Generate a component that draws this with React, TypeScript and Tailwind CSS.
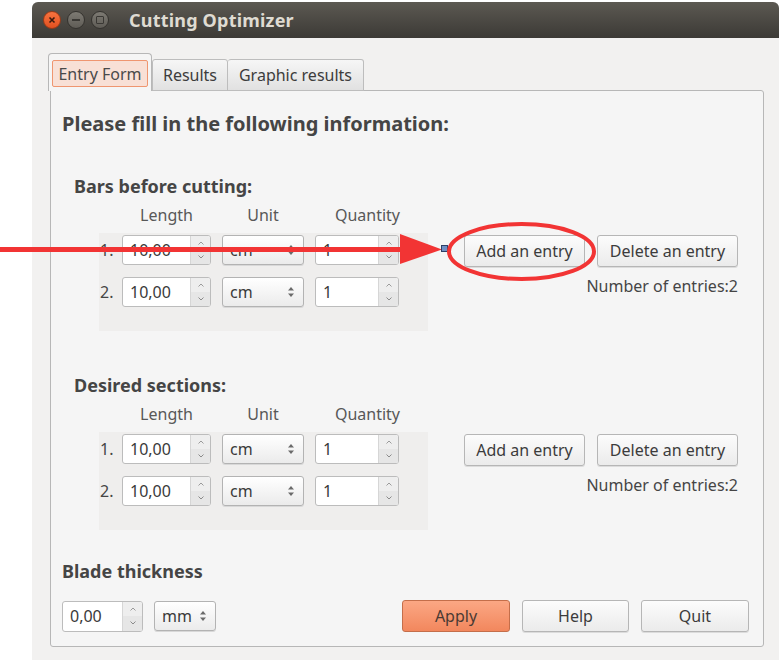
import React from "react";

const font = { fontFamily: '"Noto Sans", "Open Sans", sans-serif' };

function SpinArrows() {
  return (
    <div className="w-[20px] h-full flex flex-col border-l border-[#d6d6d6] bg-[#eeeeee]">
      <div className="flex-1 flex items-center justify-center">
        <svg width="6" height="4" viewBox="0 0 6 4">
          <path d="M0.5 3.5 L3 1 L5.5 3.5" fill="none" stroke="#9a9a9a" strokeWidth="1" />
        </svg>
      </div>
      <div className="flex-1 flex items-center justify-center bg-[#e6e6e6]">
        <svg width="6" height="4" viewBox="0 0 6 4">
          <path d="M0.5 0.5 L3 3 L5.5 0.5" fill="none" stroke="#8a8a8a" strokeWidth="1" />
        </svg>
      </div>
    </div>
  );
}

function Spin({ value, className }: { value: string; className: string }) {
  return (
    <div className={`flex h-[30px] border border-[#bcbcbc] rounded-[3px] overflow-hidden bg-white ${className}`}>
      <div className="flex-1 flex items-center pl-[7px] text-[16px] text-[#3a3a3a]">{value}</div>
      <SpinArrows />
    </div>
  );
}

function Combo({ value, className }: { value: string; className: string }) {
  return (
    <div
      className={`flex items-center justify-between h-[30px] pl-[7px] pr-[8px] border border-[#b3b3b3] rounded-[3px] bg-gradient-to-b from-[#ffffff] to-[#ebebeb] shadow-[0_1px_0_#d8d8d8] text-[16px] text-[#3a3a3a] ${className}`}
    >
      <span>{value}</span>
      <svg width="8" height="12" viewBox="0 0 8 12">
        <path d="M4 1 L7 4.5 L1 4.5 Z" fill="#6a6a6a" />
        <path d="M4 11 L7 7.5 L1 7.5 Z" fill="#6a6a6a" />
      </svg>
    </div>
  );
}

function Btn({ label, className }: { label: string; className: string }) {
  return (
    <div
      className={`flex items-center justify-center h-[32px] border border-[#b6b6b6] rounded-[3px] bg-gradient-to-b from-[#fcfcfc] to-[#ebebeb] shadow-[0_1px_0_#dcdcdc] text-[16px] text-[#3c3c3c] ${className}`}
    >
      {label}
    </div>
  );
}

function EntrySection({ title }: { title: string }) {
  return (
    <div className="pl-[12px]">
      <div className="text-[18px] leading-[20px] font-bold text-[#454545]">{title}</div>
      <div className="mt-[9px] h-[20px] flex pl-[48px] text-[16px] leading-[20px] text-[#585858]">
        <div className="w-[89px] text-center">Length</div>
        <div className="w-[82px] ml-[11px] text-center">Unit</div>
        <div className="w-[85px] ml-[11px] text-right">Quantity</div>
      </div>
      <div className="mt-[8px] flex pl-[25px]">
        <div className="w-[329px] bg-[#efeeed] pt-[2px] pb-[24px] flex flex-col gap-[12px]">
          {["1.", "2."].map((n) => (
            <div key={n} className="flex items-center h-[30px]">
              <div className="w-[23px] pl-[1px] text-[16px] text-[#454545]">{n}</div>
              <Spin value="10,00" className="w-[89px]" />
              <Combo value="cm" className="w-[82px] ml-[11px]" />
              <Spin value="1" className="w-[84px] ml-[11px]" />
            </div>
          ))}
        </div>
        <div className="ml-[36px] mt-[2px] flex flex-col">
          <div className="flex gap-[12px]">
            <Btn label="Add an entry" className="w-[121px]" />
            <Btn label="Delete an entry" className="w-[141px]" />
          </div>
          <div className="mt-[9px] text-right text-[16px] leading-[20px] text-[#454545]">Number of entries:2</div>
        </div>
      </div>
    </div>
  );
}

export default function App() {
  return (
    <div className="relative w-[779px] h-[660px] bg-white overflow-hidden" style={font}>
      <div className="ml-[32px] mt-[2px] w-[747px] h-[658px] bg-[#f2f1f0] rounded-tl-[6px] rounded-tr-[6px] overflow-hidden">
        {/* Title bar */}
        <div className="h-[36px] bg-gradient-to-b from-[#5c5952] to-[#3c3a36] flex items-center pl-[11px]">
          <div className="w-[18px] h-[18px] rounded-full bg-gradient-to-b from-[#f7733f] to-[#e2501f] border border-[#9b3a17] flex items-center justify-center">
            <svg width="8" height="8" viewBox="0 0 8 8">
              <path d="M1.5 1.5 L6.5 6.5 M6.5 1.5 L1.5 6.5" stroke="#3a1a0e" strokeWidth="1.6" />
            </svg>
          </div>
          <div className="ml-[6px] w-[18px] h-[18px] rounded-full bg-gradient-to-b from-[#7d7a73] to-[#5f5c56] border border-[#34322e] flex items-center justify-center">
            <div className="w-[8px] h-[2px] bg-[#3a3834]" />
          </div>
          <div className="ml-[6px] w-[18px] h-[18px] rounded-full bg-gradient-to-b from-[#7d7a73] to-[#5f5c56] border border-[#34322e] flex items-center justify-center">
            <div className="w-[8px] h-[8px] border-[1.5px] border-[#3a3834] rounded-[1px]" />
          </div>
          <div className="ml-[20px] text-[18px] font-bold text-[#dfdbd2] tracking-[0.2px]">Cutting Optimizer</div>
        </div>

        <div className="px-[18px] pt-[15px]">
          {/* Tabs */}
          <div className="flex items-end -ml-[2px] relative z-10 -mb-px">
            <div className="w-[104px] h-[38px] border border-b-0 border-[#b7b7b7] rounded-t-[4px] bg-[#f5f5f5] px-[3px] pt-[6px]">
              <div className="h-[27px] flex items-center justify-center border border-[#ef9670] bg-[#f8e0d6] rounded-[2px] text-[16px] text-[#4a4a4a]">
                Entry Form
              </div>
            </div>
            <div className="w-[76px] h-[32px] border border-[#bdbdbd] rounded-t-[3px] bg-gradient-to-b from-[#f6f6f6] to-[#e1e1e1] flex items-center justify-center text-[16px] text-[#3c3c3c]">
              Results
            </div>
            <div className="w-[136px] h-[32px] border border-l-0 border-[#bdbdbd] rounded-t-[3px] bg-gradient-to-b from-[#f6f6f6] to-[#e1e1e1] flex items-center justify-center text-[16px] text-[#3c3c3c]">
              Graphic results
            </div>
          </div>

          {/* Pane */}
          <div className="w-[714px] border border-[#b7b7b7] rounded-b-[3px] rounded-tr-[3px] bg-[#f5f5f5] pl-[11px] pr-[14px] pt-[21px] pb-[14px]">
            <div className="text-[20px] leading-[24px] font-bold text-[#454545]">Please fill in the following information:</div>
            <div className="mt-[40px]">
              <EntrySection title="Bars before cutting:" />
            </div>
            <div className="mt-[44px]">
              <EntrySection title="Desired sections:" />
            </div>
            <div className="mt-[31px] text-[18px] leading-[20px] font-bold text-[#454545]">Blade thickness</div>
            <div className="mt-[19px] flex items-center">
              <Spin value="0,00" className="w-[81px] h-[31px]" />
              <Combo value="mm" className="w-[62px] ml-[11px]" />
              <div className="ml-auto flex gap-[12px]">
                <div className="w-[108px] h-[32px] flex items-center justify-center rounded-[3px] border border-[#c46e4a] bg-gradient-to-b from-[#fba784] to-[#f2875d] text-[16px] text-[#4a3a33]">
                  Apply
                </div>
                <Btn label="Help" className="w-[107px]" />
                <Btn label="Quit" className="w-[108px]" />
              </div>
            </div>
          </div>
        </div>
      </div>

      {/* Annotation overlay */}
      <svg className="absolute inset-0 pointer-events-none" width="779" height="660" viewBox="0 0 779 660">
        <line x1="0" y1="249.5" x2="404" y2="249.5" stroke="#f23434" strokeWidth="5" />
        <polygon points="400,234 442,249.5 400,264" fill="#f23434" />
        <rect x="441.5" y="245.5" width="6" height="6" fill="#6f8fc4" stroke="#2e3f66" strokeWidth="1" />
        <ellipse cx="521.5" cy="251.5" rx="72.5" ry="27.5" fill="none" stroke="#f23434" strokeWidth="4" />
      </svg>
    </div>
  );
}
